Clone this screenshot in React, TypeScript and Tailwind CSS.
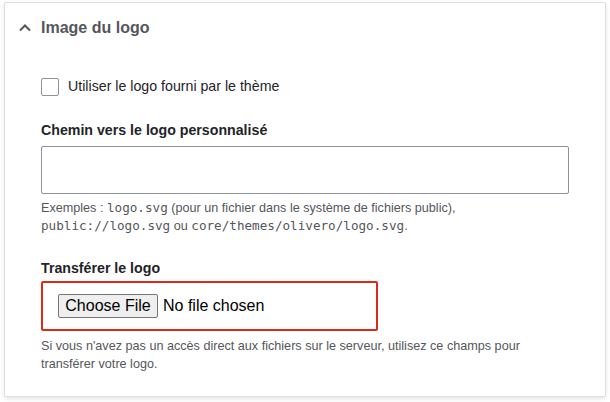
export default function App() {
  return (
    <div className="min-h-screen bg-white pt-[2px] px-[4px] font-['Liberation_Sans',Arial,sans-serif]">
      {/* carte repliable */}
      <div className="border border-[#dedfe4] rounded-[2px] bg-white shadow-[0_2px_4px_rgba(0,0,0,0.1)]">
        <div className="flex items-center h-[50px] pl-[14px] text-[#55565b]">
          <svg className="w-[12px] h-[12px]" viewBox="0 0 12 12" fill="none" stroke="currentColor" strokeWidth={2}>
            <path d="M1 8.5 L6 3.5 L11 8.5" />
          </svg>
          <span className="ml-[10px] text-[16px] font-bold leading-6">Image du logo</span>
        </div>

        <div className="px-[36px] pt-[23px] pb-[23px]">
          <label className="flex items-center gap-[9px]">
            <span className="w-[18px] h-[18px] border border-[#8e929c] rounded-[2px] bg-white" />
            <span className="text-[14.2px] text-[#232429]">Utiliser le logo fourni par le thème</span>
          </label>

          <div className="mt-[24px]">
            <div className="text-[14.2px] font-bold text-[#232429] leading-[18px]">Chemin vers le logo personnalisé</div>
            <div className="mt-[7px] h-[48px] border border-[#8e929c] rounded-[2px] bg-white" />
            <p className="mt-[5px] text-[12.64px] leading-[18px] text-[#55565b]">
              Exemples : <code className="font-['DejaVu_Sans_Mono',monospace]">logo.svg</code> (pour un fichier dans le système de fichiers public),
              <br />
              <code className="font-['DejaVu_Sans_Mono',monospace]">public://logo.svg</code> ou{' '}
              <code className="font-['DejaVu_Sans_Mono',monospace]">core/themes/olivero/logo.svg</code>.
            </p>
          </div>

          <div className="mt-[24px]">
            <div className="text-[14.2px] font-bold text-[#232429] leading-[18px]">Transférer le logo</div>
            <div className="mt-[4px] w-[337px] h-[50px] border-2 border-[#dc2a18] rounded-[2px] flex items-center pl-[15px] text-[16px] text-black">
              <span className="h-[24px] w-[100px] flex items-center justify-center border border-[#767676] rounded-[2px] bg-[#efefef]">
                Choose File
              </span>
              <span className="ml-[5px]">No file chosen</span>
            </div>
            <p className="mt-[6px] text-[12.64px] leading-[18px] text-[#55565b]">
              Si vous n'avez pas un accès direct aux fichiers sur le serveur, utilisez ce champs pour
              <br />
              transférer votre logo.
            </p>
          </div>
        </div>
      </div>
    </div>
  );
}
